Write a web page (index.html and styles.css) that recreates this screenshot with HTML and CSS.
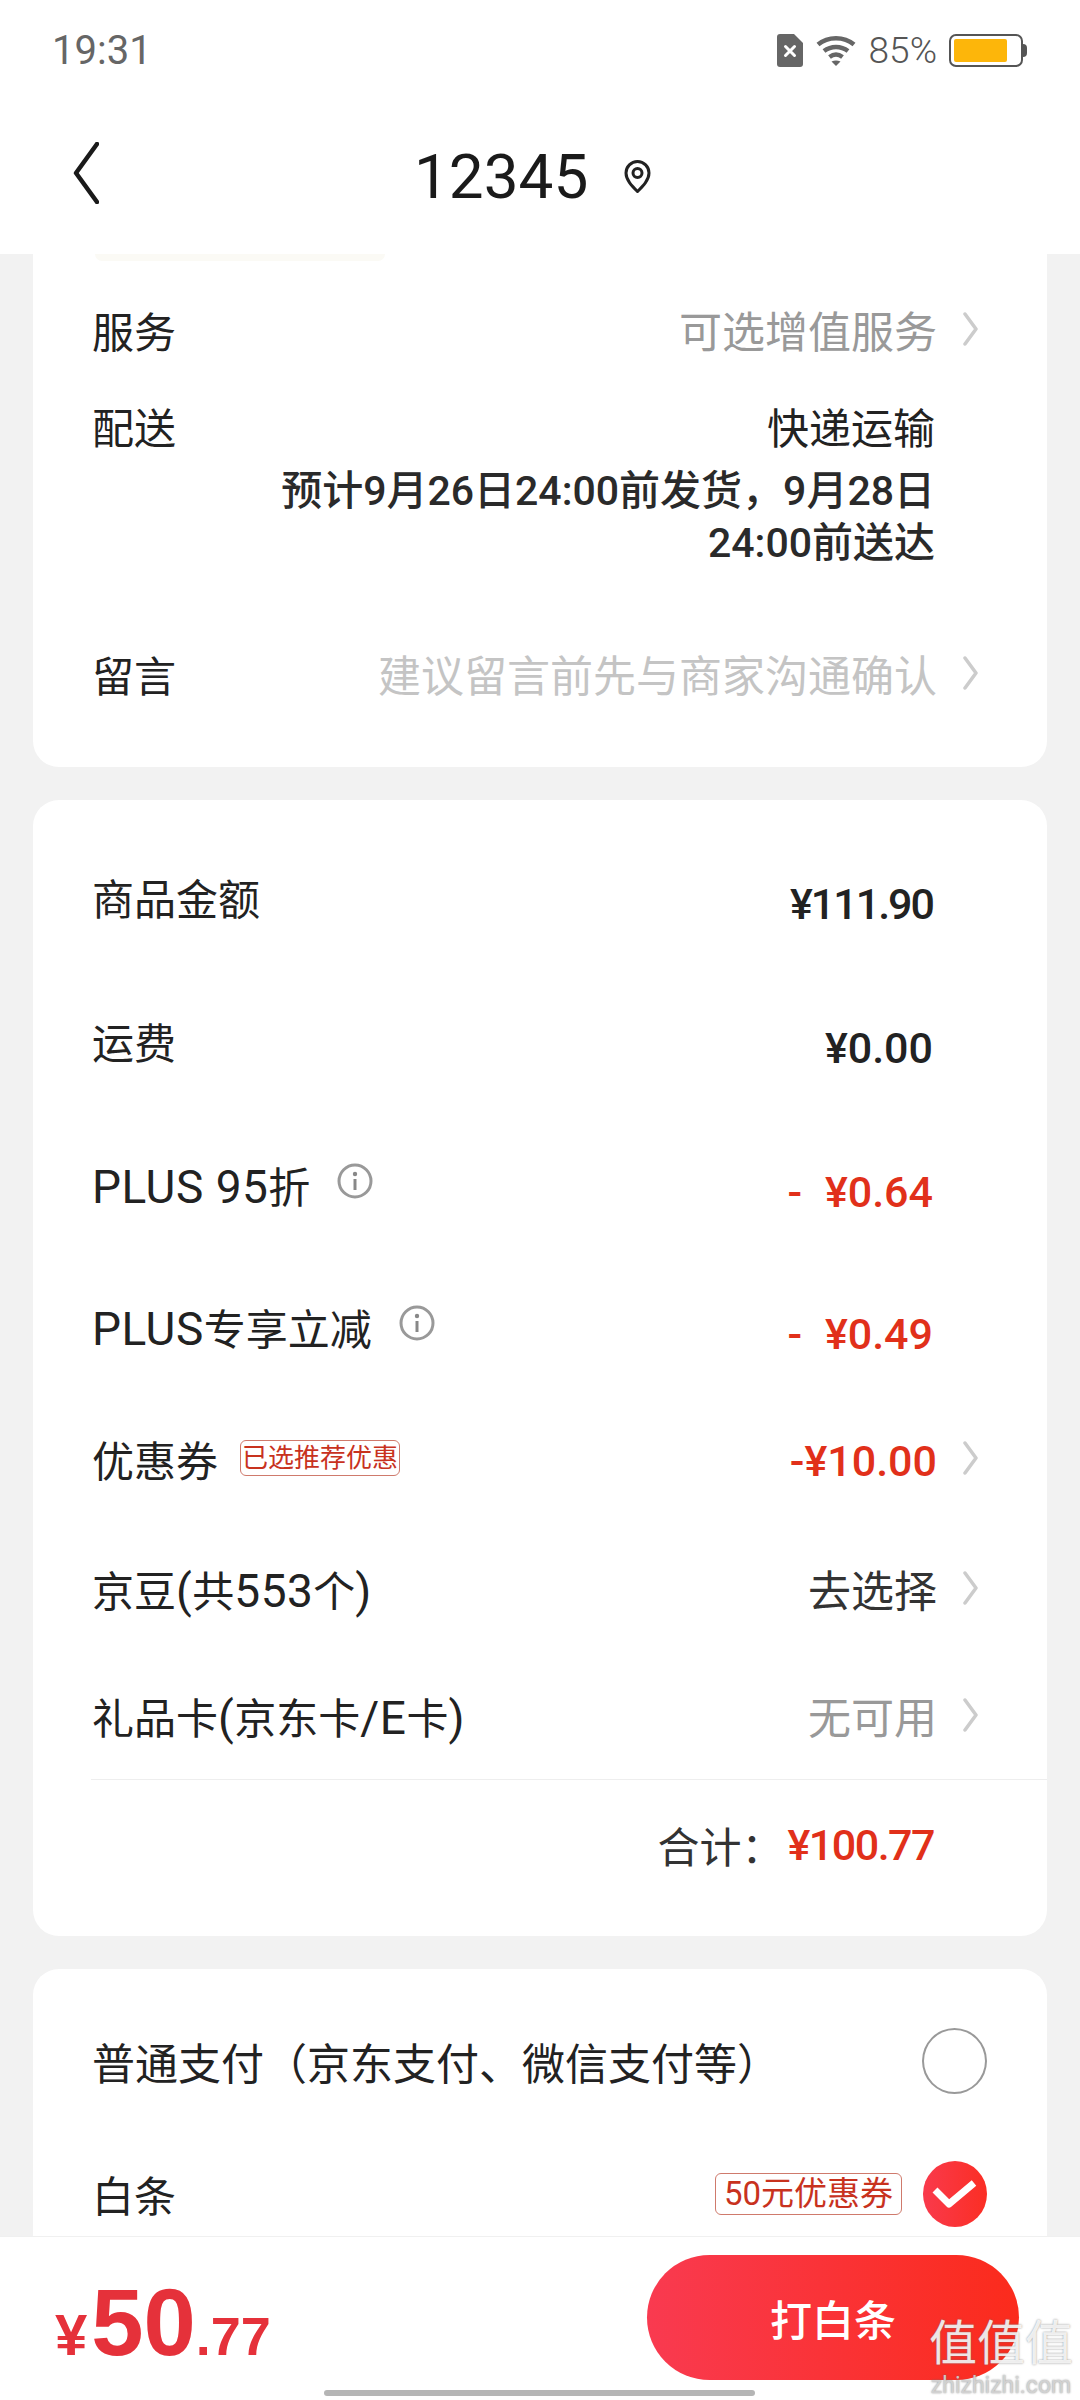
FILE: index.html
```html
<html>
<head>
    <title>确认订单</title>
    <link rel="stylesheet" href="styles.css">
</head>
<body>
    <div class="page">
        <div class="top">
            <div class="status">
                <span class="clock">19:31</span>
                <div class="status-right">
                    <svg class="sim" width="26" height="33" viewBox="0 0 26 33"><path d="M3 0h14l9 9v21a3 3 0 0 1-3 3H3a3 3 0 0 1-3-3V3a3 3 0 0 1 3-3z" fill="#666"/><path d="M8.5 12.5l9 9M17.500 12.500l-9 9" stroke="#fff" stroke-width="3" stroke-linecap="round"/></svg>
                    <svg class="wifi" width="40" height="31" viewBox="0 0 40 31"><g fill="none" stroke="#666" stroke-width="4.500"><path d="M2 9.500C12 1 28 1 38 9.500"/><path d="M8 16c7-5.500 17-5.500 24 0"/><path d="M13.500 22c4-3 9-3 13 0"/></g><path d="M15.500 26.500c3-1.500 6-1.500 9 0L20 31z" fill="#666"/></svg>
                    <span class="pct">85%</span>
                    <div class="battery"><div class="battery-level"></div></div>
                    <div class="battery-nub"></div>
                </div>
            </div>
            <div class="nav">
                <svg class="back" width="26" height="62" viewBox="0 0 26 62"><path d="M24 2L3 31l21 29" fill="none" stroke="#1a1a1a" stroke-width="4.500" stroke-linecap="round" stroke-linejoin="round"/></svg>
                <span class="title">12345</span>
                <svg class="pin" width="29" height="33" viewBox="0 0 29 33"><path d="M14.500 31.500C9 26 3 20 3 13a11.500 11.500 0 0 1 23 0c0 7-6 13-11.500 18.500z" fill="none" stroke="#222" stroke-width="3"/><circle cx="14.500" cy="13" r="4.500" fill="none" stroke="#222" stroke-width="3"/></svg>
            </div>
        </div>

        <div class="content">
            <div class="card card-first">
                <div class="thumb"></div>
                <div class="row row-service">
                    <span class="label">服务</span>
                    <span class="val muted">可选增值服务</span>
                    <svg class="chev" width="15" height="34" viewBox="0 0 15 34"><path d="M2 2l11 15L2 32" fill="none" stroke="#ccc" stroke-width="3.500" stroke-linecap="round" stroke-linejoin="round"/></svg>
                </div>
                <div class="delivery">
                    <span class="label">配送</span>
                    <div class="delivery-info">
                        <div class="delivery-type">快递运输</div>
                        <div class="delivery-time">预计9月26日24:00前发货，9月28日<br>24:00前送达</div>
                    </div>
                </div>
                <div class="row row-note">
                    <span class="label">留言</span>
                    <span class="val faint">建议留言前先与商家沟通确认</span>
                    <svg class="chev" width="15" height="34" viewBox="0 0 15 34"><path d="M2 2l11 15L2 32" fill="none" stroke="#ccc" stroke-width="3.500" stroke-linecap="round" stroke-linejoin="round"/></svg>
                </div>
            </div>

            <div class="card card-price">
                <div class="price-rows">
                    <div class="row">
                        <span class="label">商品金额</span>
                        <span class="val money tight plain">¥111.90</span>
                    </div>
                    <div class="row">
                        <span class="label">运费</span>
                        <span class="val money plain">¥0.00</span>
                    </div>
                    <div class="row">
                        <span class="label"><span class="lat">PLUS 95</span>折</span>
                        <svg class="info" width="36" height="36" viewBox="0 0 36 36"><circle cx="18" cy="18" r="16" fill="none" stroke="#999" stroke-width="3"/><circle cx="18" cy="11" r="2.200" fill="#888"/><path d="M18 16v11" stroke="#888" stroke-width="3"/></svg>
                        <span class="val money red minus plain">- ¥0.64</span>
                    </div>
                    <div class="row">
                        <span class="label"><span class="lat">PLUS</span>专享立减</span>
                        <svg class="info" width="36" height="36" viewBox="0 0 36 36"><circle cx="18" cy="18" r="16" fill="none" stroke="#999" stroke-width="3"/><circle cx="18" cy="11" r="2.200" fill="#888"/><path d="M18 16v11" stroke="#888" stroke-width="3"/></svg>
                        <span class="val money red minus plain">- ¥0.49</span>
                    </div>
                    <div class="row">
                        <span class="label">优惠券</span>
                        <span class="tag tag-small">已选推荐优惠</span>
                        <span class="val bold red">-¥10.00</span>
                        <svg class="chev" width="15" height="34" viewBox="0 0 15 34"><path d="M2 2l11 15L2 32" fill="none" stroke="#ccc" stroke-width="3.500" stroke-linecap="round" stroke-linejoin="round"/></svg>
                    </div>
                    <div class="row">
                        <span class="label">京豆<span class="lat">(</span>共<span class="lat">553</span>个<span class="lat">)</span></span>
                        <span class="val dark">去选择</span>
                        <svg class="chev" width="15" height="34" viewBox="0 0 15 34"><path d="M2 2l11 15L2 32" fill="none" stroke="#ccc" stroke-width="3.500" stroke-linecap="round" stroke-linejoin="round"/></svg>
                    </div>
                    <div class="row">
                        <span class="label">礼品卡<span class="lat">(</span>京东卡<span class="lat">/E</span>卡<span class="lat">)</span></span>
                        <span class="val muted">无可用</span>
                        <svg class="chev" width="15" height="34" viewBox="0 0 15 34"><path d="M2 2l11 15L2 32" fill="none" stroke="#ccc" stroke-width="3.500" stroke-linecap="round" stroke-linejoin="round"/></svg>
                    </div>
                </div>
                <div class="total">
                    <span class="total-label">合计：</span>
                    <span class="total-value">¥100.77</span>
                </div>
            </div>

            <div class="card card-pay">
                <div class="pay-row">
                    <span class="label pay-label">普通支付（京东支付、微信支付等）</span>
                    <div class="radio"></div>
                </div>
                <div class="pay-row">
                    <span class="label">白条</span>
                    <span class="tag tag-large">50元优惠券</span>
                    <svg class="checked" width="64" height="66" viewBox="0 0 64 66"><defs><linearGradient id="checkfill" x1="0" x2="1" y1="0" y2="0"><stop offset="0" stop-color="#f93a4c"/><stop offset="1" stop-color="#fb2e24"/></linearGradient></defs><ellipse cx="32" cy="33" rx="32" ry="33" fill="url(#checkfill)"/><path d="M12 29l14 14 25-21" fill="none" stroke="#fff" stroke-width="7" stroke-linejoin="round"/></svg>
                </div>
            </div>
        </div>

        <div class="bottom-bar">
            <div class="pay-price">
                <span class="yen">¥</span><span class="int">50</span><span class="dec">.77</span>
            </div>
            <div class="pay-btn">打白条</div>
        </div>
    </div>

    <div class="home-bar"></div>
    <div class="watermark">
        <div class="wm-big">值值值</div>
        <div class="wm-small">zhizhizhi.com</div>
    </div>
</body>
</html>
```

FILE: styles.css
```css
* { box-sizing: border-box; }
body {
    margin: 0;
    width: 1080px;
    height: 2400px;
    overflow: hidden;
    position: relative;
    font-family: Roboto, "Noto Sans CJK SC", sans-serif;
    color: #222;
    background: #f2f2f2;
}
.page {
    display: flex;
    flex-direction: column;
    height: 2400px;
}

/* top */
.top { height: 254px; background: #fff; flex-shrink: 0; }
.status {
    height: 100px;
    display: flex;
    justify-content: space-between;
    align-items: center;
    padding: 0 53px 0 52px;
}
.clock { font-size: 40px; color: #666; }
.status-right { display: flex; align-items: center; }
.wifi { margin-left: 13px; }
.pct { font-size: 37px; font-weight: 300; color: #555; margin-left: 13px; }
.battery {
    width: 74px;
    height: 33px;
    margin-left: 12px;
    padding: 3px 14px 3px 3px;
    border: 2.500px solid #555;
    border-radius: 7px;
}
.battery-level { height: 100%; background: #fdb60a; border-radius: 2px; }
.battery-nub {
    width: 4px;
    height: 13px;
    background: #555;
    border-radius: 0 4px 4px 0;
}
.nav { height: 154px; display: flex; align-items: center; padding-left: 73px; }
.back { margin-top: -8px; }
.title { font-size: 62px; color: #1a1a1a; margin-left: 315px; padding-bottom: 2px; }
.pin { margin-left: 35px; margin-top: -2px; }

/* cards */
.content {
    flex: 1;
    min-height: 0;
    overflow: hidden;
    padding: 0 33px;
    display: flex;
    flex-direction: column;
    gap: 33px;
}
.card { background: #fff; border-radius: 26px; flex-shrink: 0; }
.card-first { height: 513px; border-radius: 0 0 26px 26px; }
.thumb {
    width: 290px;
    height: 7px;
    margin-left: 62px;
    background: #fbfaf5;
    border-radius: 0 0 12px 12px;
}
.row {
    display: flex;
    align-items: center;
    padding: 0 69px 6px 59px;
}
.label { font-size: 42px; color: #222; white-space: nowrap; }
.lat { font-size: 46px; letter-spacing: 0.500px; }
.pay-label { font-size: 43px; }
.val { margin-left: auto; font-size: 43px; white-space: nowrap; }
.plain { margin-right: 45px; }
.muted { color: #999; }
.faint { color: #c4c4c4; }
.dark { color: #333; }
.money { font-weight: 500; padding-top: 15px; color: #222; }
.tight { letter-spacing: -2px; }
.minus { word-spacing: 12px; }
.bold { font-weight: 500; padding-top: 6px; }
.red { color: #e1301a; }
.chev { margin-left: 26px; flex-shrink: 0; }
.info { margin-left: 27px; margin-top: -6px; flex-shrink: 0; }

.row-service { height: 100px; margin-top: 21px; }
.delivery {
    display: flex;
    justify-content: space-between;
    padding: 23px 112px 0 59px;
}
.delivery .label { line-height: 50px; }
.delivery-info { text-align: right; }
.delivery-type { font-size: 42px; line-height: 50px; color: #222; margin-bottom: 10px; }
.delivery-time { font-size: 41px; line-height: 52px; font-weight: 500; color: #2a2a2a; }
.row-note { height: 100px; margin-top: 57px; }

.card-price { height: 1136px; padding-top: 27px; }
.price-rows {
    display: grid;
    grid-template-rows: 144px 144px 144px 140px 124px 136px 118px;
}
.total {
    margin-left: 58px;
    height: 134px;
    margin-top: 2px;
    padding-bottom: 4px;
    border-top: 1px solid #eee;
    display: flex;
    justify-content: flex-end;
    align-items: center;
    padding-right: 113px;
}
.total-label { font-size: 42px; color: #333; margin-right: 4px; }
.total-value { font-size: 43px; font-weight: 500; letter-spacing: -1.500px; color: #e1301a; }

.tag {
    color: #c8321e;
    border: 1px solid #cf7a6c;
    white-space: nowrap;
}
.tag-small {
    font-size: 26px;
    line-height: 34px;
    padding: 0 1px;
    border-radius: 6px;
    margin-left: 22px;
}
.tag-large {
    font-size: 33px;
    line-height: 40px;
    padding: 0 8px;
    border-radius: 6px;
    margin-left: auto;
    margin-right: 21px;
}

.card-pay { padding-top: 27px; height: 500px; }
.pay-row {
    height: 133px;
    display: flex;
    align-items: center;
    justify-content: space-between;
    padding: 0 60px 4px 59px;
}
.radio {
    width: 65px;
    height: 66px;
    border: 2px solid #999;
    border-radius: 50%;
}

/* bottom */
.bottom-bar {
    height: 164px;
    flex-shrink: 0;
    background: #fff;
    border-top: 1px solid #f0f0f0;
    display: flex;
    justify-content: space-between;
    padding: 18px 61px 0 55px;
    position: relative;
}
.pay-price {
    color: #e5313a;
    font-family: "Liberation Sans", sans-serif;
    font-weight: 700;
    line-height: 1;
    margin-top: 21px;
    white-space: nowrap;
}
.yen { font-size: 58px; margin-right: 4px; }
.int { font-size: 94px; }
.dec { font-size: 54px; }
.pay-btn {
    width: 372px;
    height: 125px;
    border-radius: 63px;
    background: linear-gradient(90deg, #f93a50, #fb2b1c);
    color: #fff;
    font-size: 42px;
    font-weight: 500;
    display: flex;
    align-items: center;
    justify-content: center;
}

.home-bar {
    position: absolute;
    left: 324px;
    bottom: 4px;
    width: 431px;
    height: 6px;
    border-radius: 3px;
    background: #b5b5b5;
}
.watermark {
    position: absolute;
    left: 929px;
    top: 2316px;
    width: 144px;
    text-align: center;
    color: rgba(255, 255, 255, 0.85);
    text-shadow: 0 0 2px rgba(110, 110, 110, 0.8);
}
.wm-big { font-size: 48px; line-height: 56px; white-space: nowrap; }
.wm-small { font-size: 23px; line-height: 24px; margin-top: 2px; white-space: nowrap; color: rgba(215, 215, 215, 0.9); }
```
